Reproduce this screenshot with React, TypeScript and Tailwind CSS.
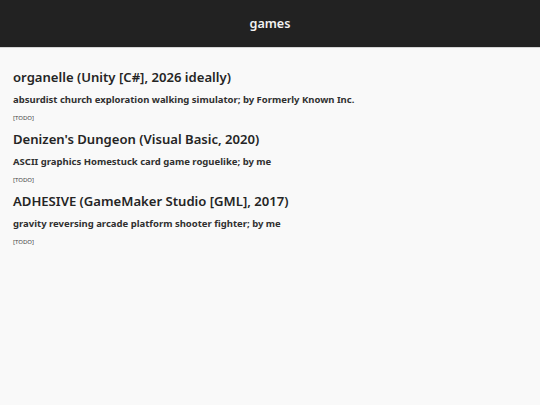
export default function App() {
  const games = [
    { t: "organelle (Unity [C#], 2026 ideally)", d: "absurdist church exploration walking simulator; by Formerly Known Inc." },
    { t: "Denizen's Dungeon (Visual Basic, 2020)", d: "ASCII graphics Homestuck card game roguelike; by me" },
    { t: "ADHESIVE (GameMaker Studio [GML], 2017)", d: "gravity reversing arcade platform shooter fighter; by me" },
  ];
  return (
    <div className="w-[540px] h-[405px] bg-[#f9f9f9] text-[#222]" style={{ fontFamily: '"Noto Sans", "Open Sans", sans-serif' }}>
      <div className="h-[47px] bg-[#222222] border-b border-[#d4d4d4] flex items-center justify-center box-content">
        <span className="text-[#f2f2f2] text-[12.6px] leading-[18px] font-semibold">games</span>
      </div>
      <div className="px-[13px] pt-[19px]">
        {games.map((g) => (
          <div key={g.t} className="h-[62px]">
            <div className="text-[13.1px] leading-[20px] font-semibold text-[#252525]">{g.t}</div>
            <div className="mt-[6px] text-[9.5px] leading-[14px] font-bold text-[#303030]">{g.d}</div>
            <div className="mt-[7px] text-[6px] leading-[8px] text-[#444]">[TODO]</div>
          </div>
        ))}
      </div>
    </div>
  );
}
